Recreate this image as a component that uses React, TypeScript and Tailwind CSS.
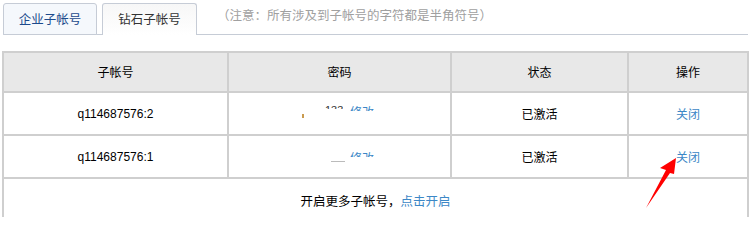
import React from "react";

const cjk = { fontFamily: '"Noto Sans CJK SC", "Liberation Sans", sans-serif' };
const latin = { fontFamily: '"Liberation Sans", Arial, sans-serif' };

const rows = [
  { account: "q114687576:2", status: "已激活" },
  { account: "q114687576:1", status: "已激活" },
];

function Arrow() {
  return (
    <svg
      className="pointer-events-none absolute left-0 top-0"
      width="751"
      height="217"
      viewBox="0 0 751 217"
    >
      <polygon points="676,158 660,168 666,170 646,208 670,173 674,174" fill="#ff0000" />
    </svg>
  );
}

export default function App() {
  return (
    <div className="relative h-[217px] w-[751px] overflow-hidden bg-white pl-[2px] pt-[4px]" style={cjk}>
      <div className="ml-px flex h-[31px] w-[745px] items-end border-b border-[#c6ccd6]">
        <div className="-mb-px flex h-[32px] w-[94px] items-center justify-center rounded-t-[3px] border border-[#c6ccd6] bg-[#f5f8fc] text-[12.5px] text-[#1c4a8c]">
          企业子帐号
        </div>
        <div className="-mb-px ml-[5px] flex h-[32px] w-[95px] items-center justify-center rounded-t-[3px] border border-b-0 border-[#c6ccd6] bg-gradient-to-b from-[#f7f7f7] to-white text-[12.5px] text-[#333]">
          钻石子帐号
        </div>
        <div className="mb-[9px] ml-[20px] text-[12.5px] text-[#a0a0a0]">
          （注意：所有涉及到子帐号的字符都是半角符号）
        </div>
      </div>

      <table className="mt-[16px] w-[745px] table-fixed border-collapse text-[12px] text-black">
        <colgroup>
          <col className="w-[225px]" />
          <col className="w-[223px]" />
          <col className="w-[177px]" />
          <col className="w-[120px]" />
        </colgroup>
        <thead>
          <tr className="h-[40px] bg-[#e8e8e8]">
            <th className="border-2 border-[#cfcfcf] font-normal">子帐号</th>
            <th className="border-2 border-[#cfcfcf] font-normal">密码</th>
            <th className="border-2 border-[#cfcfcf] font-normal">状态</th>
            <th className="border-2 border-[#cfcfcf] font-normal">操作</th>
          </tr>
        </thead>
        <tbody>
          {rows.map((r, i) => (
            <tr key={r.account} className="h-[43px]">
              <td className="border-2 border-[#cfcfcf] text-center" style={latin}>
                {r.account}
              </td>
              <td className="border-2 border-[#cfcfcf]">
                <div className="relative h-[40px]">
                  {i === 0 ? (
                    <>
                      <span className="absolute left-[96px] top-[11px] h-[4px] overflow-hidden text-[11px] leading-[11px] text-[#333]" style={latin}>
                        133
                      </span>
                      <span className="absolute left-[73px] top-[20px] h-[4px] w-[2px] bg-[#c99b4f]" />
                    </>
                  ) : (
                    <span className="absolute left-[102px] top-[24px] h-px w-[14px] bg-[#bbb]" />
                  )}
                  <span
                    className={`absolute left-[121px] h-[5px] overflow-hidden text-[12px] leading-[12px] text-[#3c87c6] ${i === 0 ? "top-[12px]" : "top-[15px]"}`}
                  >
                    修改
                  </span>
                </div>
              </td>
              <td className="border-2 border-[#cfcfcf] text-center">{r.status}</td>
              <td className="border-2 border-[#cfcfcf] text-center text-[#3c87c6]">关闭</td>
            </tr>
          ))}
          <tr className="h-[44px]">
            <td colSpan={4} className="border-2 border-b-0 border-[#cfcfcf] pt-[1px] text-center text-[12.5px]">
              开启更多子帐号，<span className="text-[#3c87c6]">点击开启</span>
            </td>
          </tr>
        </tbody>
      </table>
      <Arrow />
    </div>
  );
}
